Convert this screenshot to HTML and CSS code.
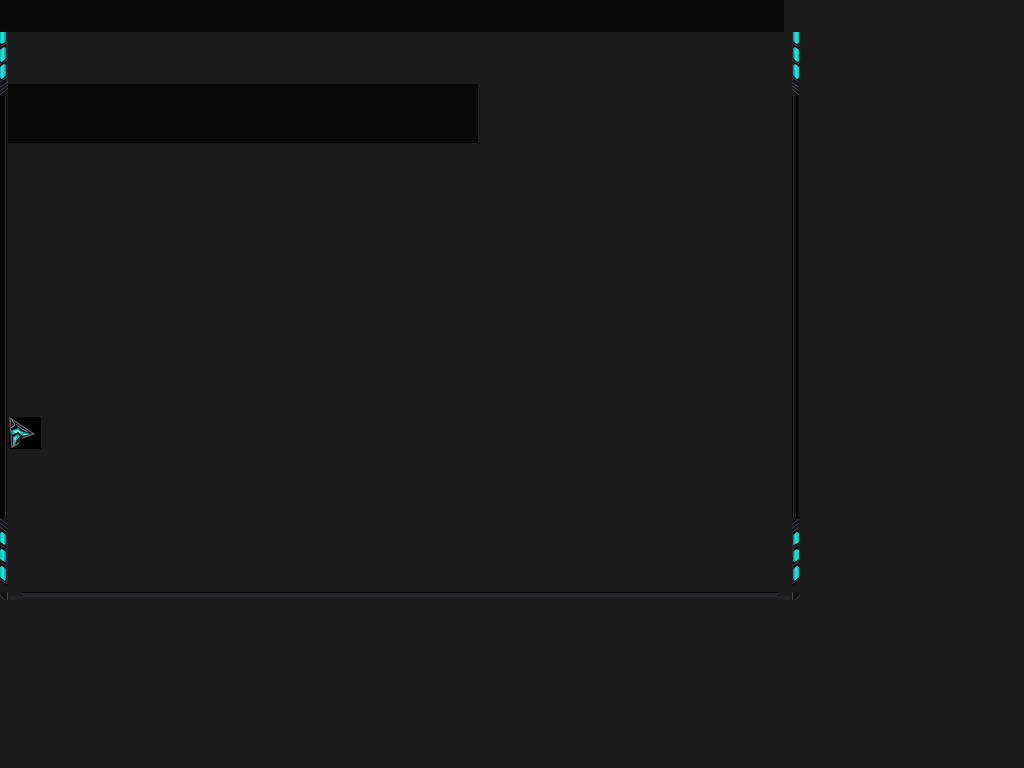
FILE: index.html
```
<!DOCTYPE html>
<html lang="en">
<head>
<meta charset="utf-8">
<meta name="viewport" content="width=device-width, initial-scale=1">
<title>Window frame</title>
<link rel="stylesheet" href="styles.css">
</head>
<body>
<svg class="defs" aria-hidden="true">
  <defs>
    <linearGradient id="glow" x1="0" x2="1">
      <stop offset="0" stop-color="#0aa5a5"/>
      <stop offset=".3" stop-color="#18e8de"/>
      <stop offset=".65" stop-color="#14dcd4"/>
      <stop offset="1" stop-color="#07757c"/>
    </linearGradient>
    <symbol id="cap-top" viewBox="0 0 8 64">
      <path d="M0 0h8v57L2 64H0z" fill="#131216"/>
      <path d="M0 0h6v9l-4 3-2-1zM0 18l4-3 2 1v10l-4 4-2-1zM0 35l4-3 2 1v10l-4 4-2-1z" fill="url(#glow)"/>
      <path d="M0 15l7-4M0 32l7-4M0 50l7-5M7 0v50" stroke="#40364a" fill="none"/>
      <path d="M0 55l8-5M0 59l8-6M0 63l8-7" stroke="#464348" fill="none"/>
    </symbol>
    <symbol id="cap-bottom" viewBox="0 0 8 74">
      <path d="M0 0h3l5 6v62l-2 1-6-5z" fill="#131216"/>
      <path d="M0 1l8 6M0 5l8 6M0 9l8 6" stroke="#464348" fill="none"/>
      <path d="M0 15l2-1 4 3v9l-1 1-5-3zM0 32l2-1 4 3v9l-1 1-5-3zM0 49l2-1 4 3v10l-1 2-5-4z" fill="url(#glow)"/>
      <path d="M0 27l7 4M0 44l7 4M0 61l7 5M7 14v52" stroke="#43323e" fill="none"/>
    </symbol>
  </defs>
</svg>
<header class="titlebar"></header>
<main class="frame">
  <div class="rail rail-left">
    <svg class="cap cap-top" aria-hidden="true"><use href="#cap-top"/></svg>
    <div class="line"></div>
    <svg class="cap cap-bottom" aria-hidden="true"><use href="#cap-bottom"/></svg>
  </div>
  <section class="content">
    <div class="banner"></div>
    <div class="pointer">
      <svg class="pointer-art" viewBox="0 0 32 32" aria-hidden="true">
        <path d="M1 1l24 16-9 3-7 4-6 6z" fill="#10171b"/>
        <path d="M3 30L1 1l24 16-9 3-5 2-2 5z" stroke="#645860" stroke-width="1.5" fill="none"/>
        <path d="M2 14l7-3 5 4 8 2-8 2-5-3-5 3zM4 20l5-3 2 2-4 5-1 5H4z" fill="#16a8a8"/>
        <path d="M4 14l5-1 4 3-6 1zM14 17l6 0-5 1zM5 21l3-2-2 6z" fill="#7be9e2"/>
        <path d="M2 12l7-3 4 5M3 19l6-3 4 4-4 5" stroke="#0c1014" stroke-width="1.5" fill="none"/>
        <path d="M3 3l3 5-4 3M7 7l6 5 6 3" stroke="#907983" fill="none"/>
      </svg>
    </div>
  </section>
  <div class="rail rail-right">
    <svg class="cap cap-top" aria-hidden="true"><use href="#cap-top" x="1"/></svg>
    <div class="line"></div>
    <svg class="cap cap-bottom" aria-hidden="true"><use href="#cap-bottom" x="1"/></svg>
  </div>
  <div class="corner"></div>
  <div class="base"></div>
  <div class="corner corner-right"></div>
</main>
</body>
</html>
```
FILE: styles.css
```
* { box-sizing: border-box; }
body {
  margin: 0;
  min-height: 100vh;
  background: #1b1b1b;
  font-family: "Liberation Sans", sans-serif;
}
.defs { position: absolute; width: 0; height: 0; }
.titlebar { width: 76.5625%; height: 32px; background: #090909; }
.frame {
  display: grid;
  grid-template-columns: 8px 1fr 8px;
  grid-template-rows: minmax(560px, auto) 8px;
  width: 78.125%;
}
.rail { display: flex; flex-direction: column; }
.cap { display: block; width: 8px; flex: none; }
.rail-right .cap { transform: scaleX(-1); }
.cap-top { height: 64px; }
.cap-bottom { height: 74px; }
.cap use { width: 8px; }
.cap-top use { height: 64px; }
.cap-bottom use { height: 74px; }
.line {
  flex: 1;
  background: linear-gradient(90deg, #070707 5px, #2c2c2c 5px 6px, #000 6px 7px, #1b1b1b 7px);
}
.rail-right .line {
  background: linear-gradient(90deg, #000 1px, #303030 1px 2px, #050505 2px 3px, #202020 3px 4px, #000 4px 6px, #171717 6px);
}
.content { display: flex; flex-direction: column; padding-top: 52px; }
.banner {
  width: 60%;
  height: 59px;
  background: #090909;
  border-right: 1px solid #030303;
  border-bottom: 1px solid #000;
}
.pointer {
  width: 32px;
  height: 32px;
  margin: 274px 0 0 1px;
  background: #020202;
}
.pointer-art { display: block; width: 32px; height: 32px; }
.base {
  margin: 0 14px;
  background: linear-gradient(#000 1px, #232225 1px, #2a292c 5px, #1a191b 6px);
  box-shadow: -14px 2px 0 -2px #222124, 14px 2px 0 -2px #222124;
}
.corner {
  background: linear-gradient(45deg, #1b1b1b 3px, #38363b 3px 4px, #151517 4px);
  border-right: 1px solid #444246;
}
.corner-right {
  background: linear-gradient(315deg, #1b1b1b 3px, #38363b 3px 4px, #151517 4px);
  border-right: 0;
  border-left: 1px solid #444246;
}
```
